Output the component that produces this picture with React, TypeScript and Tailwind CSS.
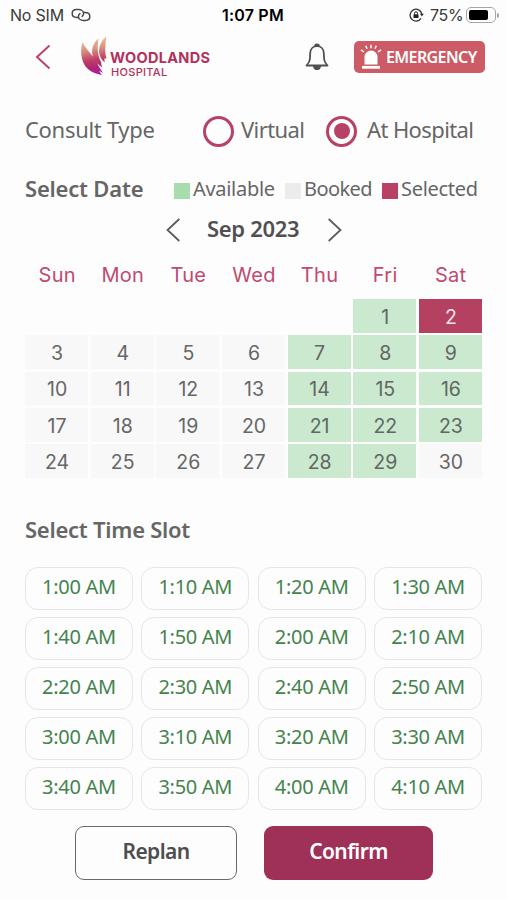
import React, { useState } from 'react';
import clsx from 'clsx';

const weekDays = ['Sun', 'Mon', 'Tue', 'Wed', 'Thu', 'Fri', 'Sat'];

const availableDays = [1, 7, 8, 9, 14, 15, 16, 21, 22, 23, 28, 29];

const timeSlots = [
  '1:00 AM', '1:10 AM', '1:20 AM', '1:30 AM',
  '1:40 AM', '1:50 AM', '2:00 AM', '2:10 AM',
  '2:20 AM', '2:30 AM', '2:40 AM', '2:50 AM',
  '3:00 AM', '3:10 AM', '3:20 AM', '3:30 AM',
  '3:40 AM', '3:50 AM', '4:00 AM', '4:10 AM',
];

const StatusBar = () => (
  <div className="flex h-[30px] shrink-0 items-center pl-[10px] font-['Inter',sans-serif] text-[16px] text-[#3a3a3c]">
    <span className="w-[61px] whitespace-nowrap tracking-[-0.2px]">No SIM</span>
    <svg width="20" height="14" viewBox="0 0 20 14" fill="none" stroke="#4a4a4a" strokeWidth="1.5" strokeLinecap="round">
      <path d="M7.500 9.400H5.600C3 9.400 1.200 7.800 1.200 5.500S3 1.600 5.400 1.600h2.200c2.900 0 5 1.700 5 4 0 1.200-.6 2.200-1.500 2.800" />
      <path d="M12.500 4.600h1.900c2.600 0 4.400 1.600 4.400 3.900s-1.800 3.900-4.200 3.900h-2.200c-2.900 0-5-1.700-5-4 0-1.200.6-2.200 1.500-2.800" />
    </svg>
    <span className="ml-[131px] w-[64px] whitespace-nowrap font-semibold tracking-[0.2px] text-black">1:07 PM</span>
    <svg className="ml-[123px]" width="15" height="14" viewBox="0 0 15 14" fill="none">
      <path d="M12 10.300A5.900 5.900 0 1 1 12.800 6" stroke="#333" strokeWidth="1.300" />
      <path d="M10.900 5.800h4l-2 2.800z" fill="#333" />
      <rect x="4.500" y="6.200" width="5" height="3.800" rx=".5" fill="#222" />
      <path d="M5.500 6.500V5.300a1.500 1.500 0 0 1 3 0v1.200" stroke="#222" strokeWidth="1" />
    </svg>
    <span className="ml-[6px] w-[34px] whitespace-nowrap tracking-[-0.3px]">75%</span>
    <div className="ml-[2px] h-[16px] w-[30px] rounded-[5px] border-[1.500px] border-[#a5a5a5] p-[2px]">
      <div className="h-full w-[19px] rounded-[2px] bg-black" />
    </div>
    <div className="ml-[1px] h-[5px] w-[2px] rounded-r-full bg-[#a5a5a5]" />
  </div>
);

const Logo = () => (
  <div className="flex h-[42px] w-[132px]">
    <svg width="30" height="42" viewBox="0 0 30 42">
      <defs>
        <linearGradient id="feather" gradientUnits="userSpaceOnUse" x1="10" y1="2" x2="17" y2="39">
          <stop offset="0" stopColor="#efc79b" />
          <stop offset="0.3" stopColor="#dc9080" />
          <stop offset="0.58" stopColor="#c03f66" />
          <stop offset="0.8" stopColor="#b02470" />
          <stop offset="1" stopColor="#a51fb0" />
        </linearGradient>
      </defs>
      <g fill="url(#feather)">
        <path d="M2.500 6C.5 12 .6 21 4 28c3.200 6.200 9.500 9.500 18 11-1.500-1.600-2.300-3-2.500-4.200l3.300 2.200c-1.300-3.500-4.300-6-5.800-10C14.500 20 6.500 15 2.500 6z" />
        <path d="M18.500 2.500C13.500 6.500 11 13 12.500 19c1.300 5.500 5 9.500 10 12.500-1.200-2.200-1.500-3.800-1.200-5C17.500 19.500 17 12 18.500 2.500z" />
        <path d="M26.500 0C20.500 5.500 18 12.500 19.500 18.500c.9 3.500 2.800 6 5.300 8-.6-2-.4-3.500 0-4.500l1.700 1C24.500 16 25.200 8 26.500 0z" />
      </g>
    </svg>
    <div className="flex flex-col pt-[13px] font-['Inter',sans-serif] text-[#b3305a]">
      <span className="h-[14px] whitespace-nowrap text-[14.500px] font-bold leading-[17px] tracking-[0.3px]">WOODLANDS</span>
      <span className="pl-[1px] whitespace-nowrap text-[11px] font-medium leading-[18px] tracking-[0.3px]">HOSPITAL</span>
    </div>
  </div>
);

const Header = () => (
  <div className="flex h-[54px] shrink-0 items-center pl-[35px]">
    <button>
      <svg width="16" height="26" viewBox="0 0 16 26" fill="none" stroke="#bd4468" strokeWidth="2">
        <path d="M14.500 1.500 2 13l12.500 11.500" />
      </svg>
    </button>
    <div className="ml-[29px]">
      <Logo />
    </div>
    <button className="ml-[93px]">
      <svg width="24" height="28" viewBox="0 0 24 28" fill="none" stroke="#505053" strokeWidth="1.800" strokeLinejoin="round">
        <path d="M12 3.200C8 3.200 5.400 6 5.200 10l-.3 6c-.1 2.500-1.200 4.200-3.400 6.500h21c-2.200-2.300-3.300-4-3.400-6.500l-.3-6C18.600 6 16 3.200 12 3.200z" />
        <path d="M10.200 3a1.800 1.500 0 0 1 3.600 0zM8.800 23.200c.5 2 1.600 3 3.200 3s2.700-1 3.200-3z" fill="#505053" />
      </svg>
    </button>
    <button className="ml-[25px] flex h-[32px] w-[131px] items-center rounded-[5px] bg-[#cc5b65] pl-[6px] text-white">
      <svg width="22" height="26" viewBox="0 0 22 26" fill="none">
        <path d="M4.500 20.500V13a6.500 6.500 0 0 1 13 0v7.500z" fill="white" />
        <path d="M2 23.300h18" stroke="white" strokeWidth="2.800" />
        <path d="M11 .8v3.400M5.700 1.800l1.400 3M16.300 1.800l-1.400 3M1 5.800l3 2.200M21 5.800l-3 2.200" stroke="white" strokeWidth="1.500" />
      </svg>
      <span className="ml-[4px] whitespace-nowrap font-['Noto_Sans','Open_Sans',sans-serif] text-[16px] font-semibold tracking-[-0.600px]">
        EMERGENCY
      </span>
    </button>
  </div>
);

interface RadioProps {
  checked: boolean;
  onClick: () => void;
}

const Radio = ({ checked, onClick }: RadioProps) => (
  <button
    onClick={onClick}
    className="flex h-[31px] w-[31px] items-center justify-center rounded-full border-[3px] border-[#b84265]"
  >
    {checked && <span className="h-[16px] w-[16px] rounded-full bg-[#b84265]" />}
  </button>
);

const App = () => {
  const [consultType, setConsultType] = useState('hospital');
  const [selectedDay, setSelectedDay] = useState(2);

  const getDayColor = (day: number) => {
    if (day === selectedDay) return 'bg-[#b54161] text-[#f6e3e8]';
    if (availableDays.includes(day)) return 'bg-[#cae9ce] text-[#606763]';
    return 'bg-[#f8f8f8] text-[#666666]';
  };

  return (
    <div className="flex h-[900px] w-[507px] flex-col overflow-hidden bg-[#fdfdfd] font-['Noto_Sans','Open_Sans',sans-serif] text-[#666666]">
      <StatusBar />
      <Header />

      {/* Consult type */}
      <div className="mt-[27px] flex h-[40px] shrink-0 items-center pl-[25px] text-[22px]">
        <span className="w-[178px] whitespace-nowrap pb-[4px] tracking-[-0.3px]">Consult Type</span>
        <Radio checked={consultType === 'virtual'} onClick={() => setConsultType('virtual')} />
        <span className="ml-[7px] w-[85px] whitespace-nowrap pb-[4px] tracking-[-0.600px]">Virtual</span>
        <Radio checked={consultType === 'hospital'} onClick={() => setConsultType('hospital')} />
        <span className="ml-[10px] whitespace-nowrap pb-[4px] tracking-[-0.600px]">At Hospital</span>
      </div>

      {/* Date legend */}
      <div className="mt-[19px] flex h-[40px] shrink-0 items-center pl-[25px] text-[20px] tracking-[-0.3px]">
        <span className="w-[149px] whitespace-nowrap pb-[4px] text-[22px] font-semibold tracking-[-0.2px]">Select Date</span>
        <span className="mt-[2px] h-[16px] w-[16px] bg-[#a7dcae]" />
        <span className="ml-[3px] w-[92px] whitespace-nowrap pb-[2px]">Available</span>
        <span className="mt-[2px] h-[16px] w-[16px] bg-[#ececec]" />
        <span className="ml-[3px] w-[78px] whitespace-nowrap pb-[2px] tracking-[-0.600px]">Booked</span>
        <span className="mt-[2px] h-[16px] w-[16px] bg-[#b84265]" />
        <span className="ml-[3px] whitespace-nowrap pb-[2px]">Selected</span>
      </div>

      {/* Month switcher */}
      <div className="flex h-[40px] shrink-0 items-center pl-[166px]">
        <svg width="14" height="24" viewBox="0 0 14 24" fill="none" stroke="#5c5c5c" strokeWidth="1.800">
          <path d="M13.300 1 1.500 12l11.800 11" />
        </svg>
        <span className="ml-[27px] w-[121px] whitespace-nowrap pb-[4px] text-[22px] font-semibold tracking-[-0.3px] text-[#505053]">
          Sep 2023
        </span>
        <svg width="14" height="24" viewBox="0 0 14 24" fill="none" stroke="#5c5c5c" strokeWidth="1.800">
          <path d="M.7 1l11.800 11L.7 23" />
        </svg>
      </div>

      {/* Calendar */}
      <div className="mx-[25px] mt-[4px] font-['Inter',sans-serif]">
        <div className="grid h-[42px] grid-cols-7 items-center gap-x-[3px] pl-[1px] text-center text-[20px] tracking-[0.3px] text-[#c04a70]">
          {weekDays.map((day) => (
            <span key={day}>{day}</span>
          ))}
        </div>
        <div className="mt-[3px] grid h-[179px] grid-cols-7 grid-rows-5 gap-[2.500px] text-[19.500px]">
          {Array.from({ length: 30 }, (_, i) => i + 1).map((day) => (
            <button
              key={day}
              onClick={() => setSelectedDay(day)}
              className={clsx('flex items-center justify-center pl-[1px] pt-[3px]', day === 1 && 'col-start-6', getDayColor(day))}
            >
              {day}
            </button>
          ))}
        </div>
      </div>

      {/* Time slots */}
      <h2 className="mt-[35px] h-[32px] shrink-0 whitespace-nowrap pl-[25px] text-[22px] font-semibold leading-[32px] tracking-[-0.250px]">
        Select Time Slot
      </h2>
      <div className="mx-[25px] mt-[22px] grid h-[243px] shrink-0 grid-cols-4 grid-rows-5 gap-x-[8.500px] gap-y-[7px]">
        {timeSlots.map((slot) => (
          <button
            key={slot}
            className="flex items-center justify-center whitespace-nowrap rounded-[13px] border-[1.500px] border-[#e5e6e7] pb-[3px] text-[20px] tracking-[-0.3px] text-[#44834e]"
          >
            {slot}
          </button>
        ))}
      </div>

      {/* Actions */}
      <div className="mt-[16px] flex shrink-0 gap-[27px] pl-[75px] text-[21px] font-semibold tracking-[-0.600px]">
        <button className="h-[54px] w-[162px] rounded-[9px] border-[1.500px] border-[#69696b] pb-[2px] text-[#4e4e50]">Replan</button>
        <button className="h-[54px] w-[169px] rounded-[9px] bg-[#9f3058] pb-[2px] text-white">Confirm</button>
      </div>
    </div>
  );
};

export default App;
